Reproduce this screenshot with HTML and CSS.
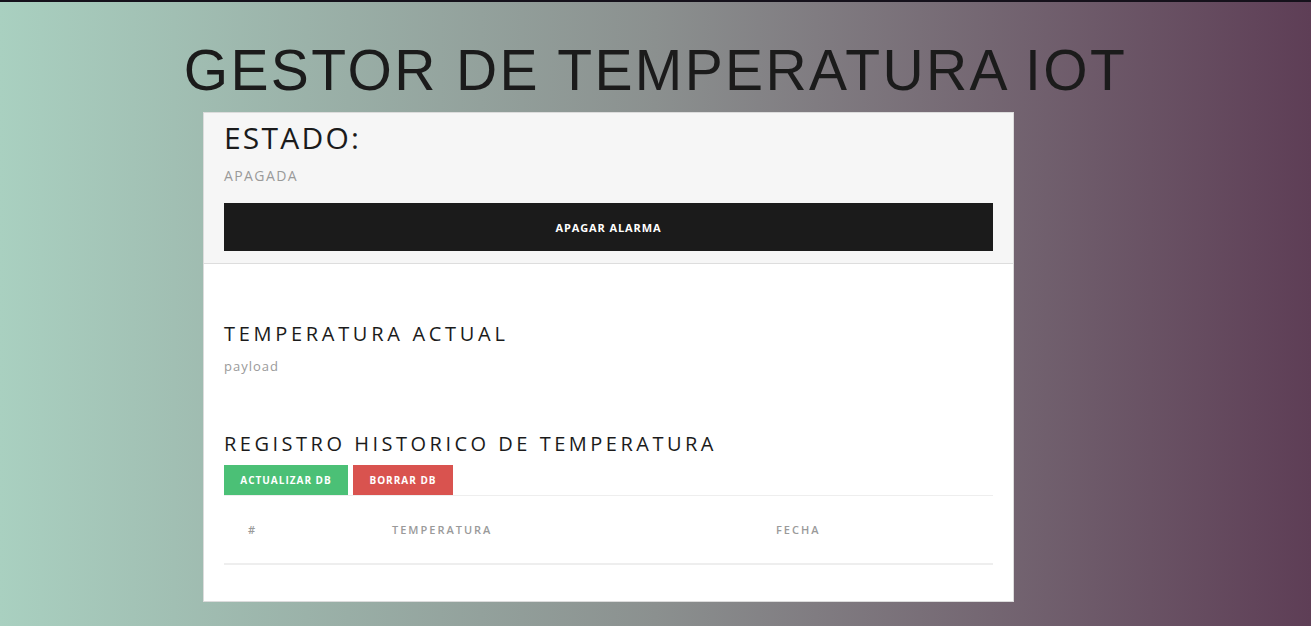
FILE: index.html
```html
<!DOCTYPE html>
<html lang="es">
<head>
<meta charset="utf-8">
<title>Gestor de Temperatura IOT</title>
<link rel="stylesheet" href="styles.css">
</head>
<body>
<div class="page">
  <h1 class="title">GESTOR DE TEMPERATURA IOT</h1>
  <div class="card">
    <div class="card-header">
      <h2 class="state-title">ESTADO:</h2>
      <p class="muted state-value">APAGADA</p>
      <button class="btn-dark">APAGAR ALARMA</button>
    </div>
    <div class="card-body">
      <h3 class="section-title">TEMPERATURA ACTUAL</h3>
      <p class="muted payload">payload</p>
      <h3 class="section-title history">REGISTRO HISTORICO DE TEMPERATURA</h3>
      <div class="actions">
        <button class="btn btn-green">ACTUALIZAR DB</button>
        <button class="btn btn-red">BORRAR DB</button>
      </div>
      <table class="table">
        <thead>
          <tr>
            <th class="c1">#</th>
            <th class="c2">TEMPERATURA</th>
            <th class="c3">FECHA</th>
          </tr>
        </thead>
      </table>
    </div>
  </div>
</div>
</body>
</html>
```

FILE: styles.css
```css
html, body {
  margin: 0;
  padding: 0;
  height: 100%;
}
body {
  background: linear-gradient(to right, #a9d0c0 0%, #8b908f 50%, #5e3e56 100%);
  border-top: 2px solid #15111b;
  box-sizing: border-box;
  overflow: hidden;
}
.page {
  display: flex;
  flex-direction: column;
}
.title {
  margin: 34px 0 8px 0;
  text-align: center;
  font-family: "Liberation Sans", Arial, sans-serif;
  font-weight: 400;
  font-size: 57px;
  line-height: 68px;
  letter-spacing: 2.4px;
  color: #1b1b1b;
}
.card {
  width: 809px;
  margin-left: 203px;
  background: #fff;
  border: 1px solid #dcdcdc;
  font-family: "Open Sans", "Noto Sans", sans-serif;
}
.card-header {
  background: #f6f6f6;
  border-bottom: 1px solid #dddddd;
  padding: 7px 20px 12px 20px;
}
.state-title {
  margin: 0;
  font-size: 30px;
  line-height: 36px;
  font-weight: 400;
  letter-spacing: 2.2px;
  color: #1b1b1b;
}
.muted {
  color: #9a9a9a;
  margin: 0;
}
.state-value {
  margin-top: 10px;
  font-size: 14px;
  line-height: 20px;
  letter-spacing: 1.4px;
}
.btn-dark {
  display: block;
  width: 100%;
  margin-top: 17px;
  height: 48px;
  border: none;
  background: #1b1b1b;
  color: #fff;
  font-family: "Open Sans", "Noto Sans", sans-serif;
  font-weight: 700;
  font-size: 11px;
  letter-spacing: 0.9px;
  cursor: pointer;
}
.card-body {
  padding: 56px 20px 36px 20px;
}
.section-title {
  margin: 0;
  font-size: 20px;
  line-height: 28px;
  font-weight: 400;
  letter-spacing: 3.7px;
  color: #1b1b1b;
}
.payload {
  margin-top: 8px;
  font-size: 13px;
  line-height: 20px;
  letter-spacing: 1px;
}
.history {
  margin-top: 54px;
  letter-spacing: 3.5px;
}
.actions {
  display: flex;
  gap: 5px;
  margin-top: 7px;
}
.btn {
  height: 30px;
  border: none;
  padding: 0 16px;
  color: #fff;
  font-family: "Open Sans", "Noto Sans", sans-serif;
  font-weight: 700;
  font-size: 10px;
  letter-spacing: 1px;
  cursor: pointer;
}
.btn-green {
  background: #4bc076;
  width: 124px;
}
.btn-red {
  background: #d9534f;
  width: 100px;
}
.table {
  width: 100%;
  border-collapse: collapse;
  border-top: 1px solid #eeeeee;
  border-bottom: 2px solid #eeeeee;
}
.table th {
  height: 67px;
  padding: 0;
  text-align: left;
  font-size: 11px;
  font-weight: 600;
  letter-spacing: 2px;
  color: #9a9a9a;
}
.table .c1 {
  width: 144px;
  padding-left: 24px;
  box-sizing: border-box;
}
.table .c2 {
  width: 384px;
  padding-left: 24px;
  box-sizing: border-box;
}
.table .c3 {
  padding-left: 24px;
}
```
